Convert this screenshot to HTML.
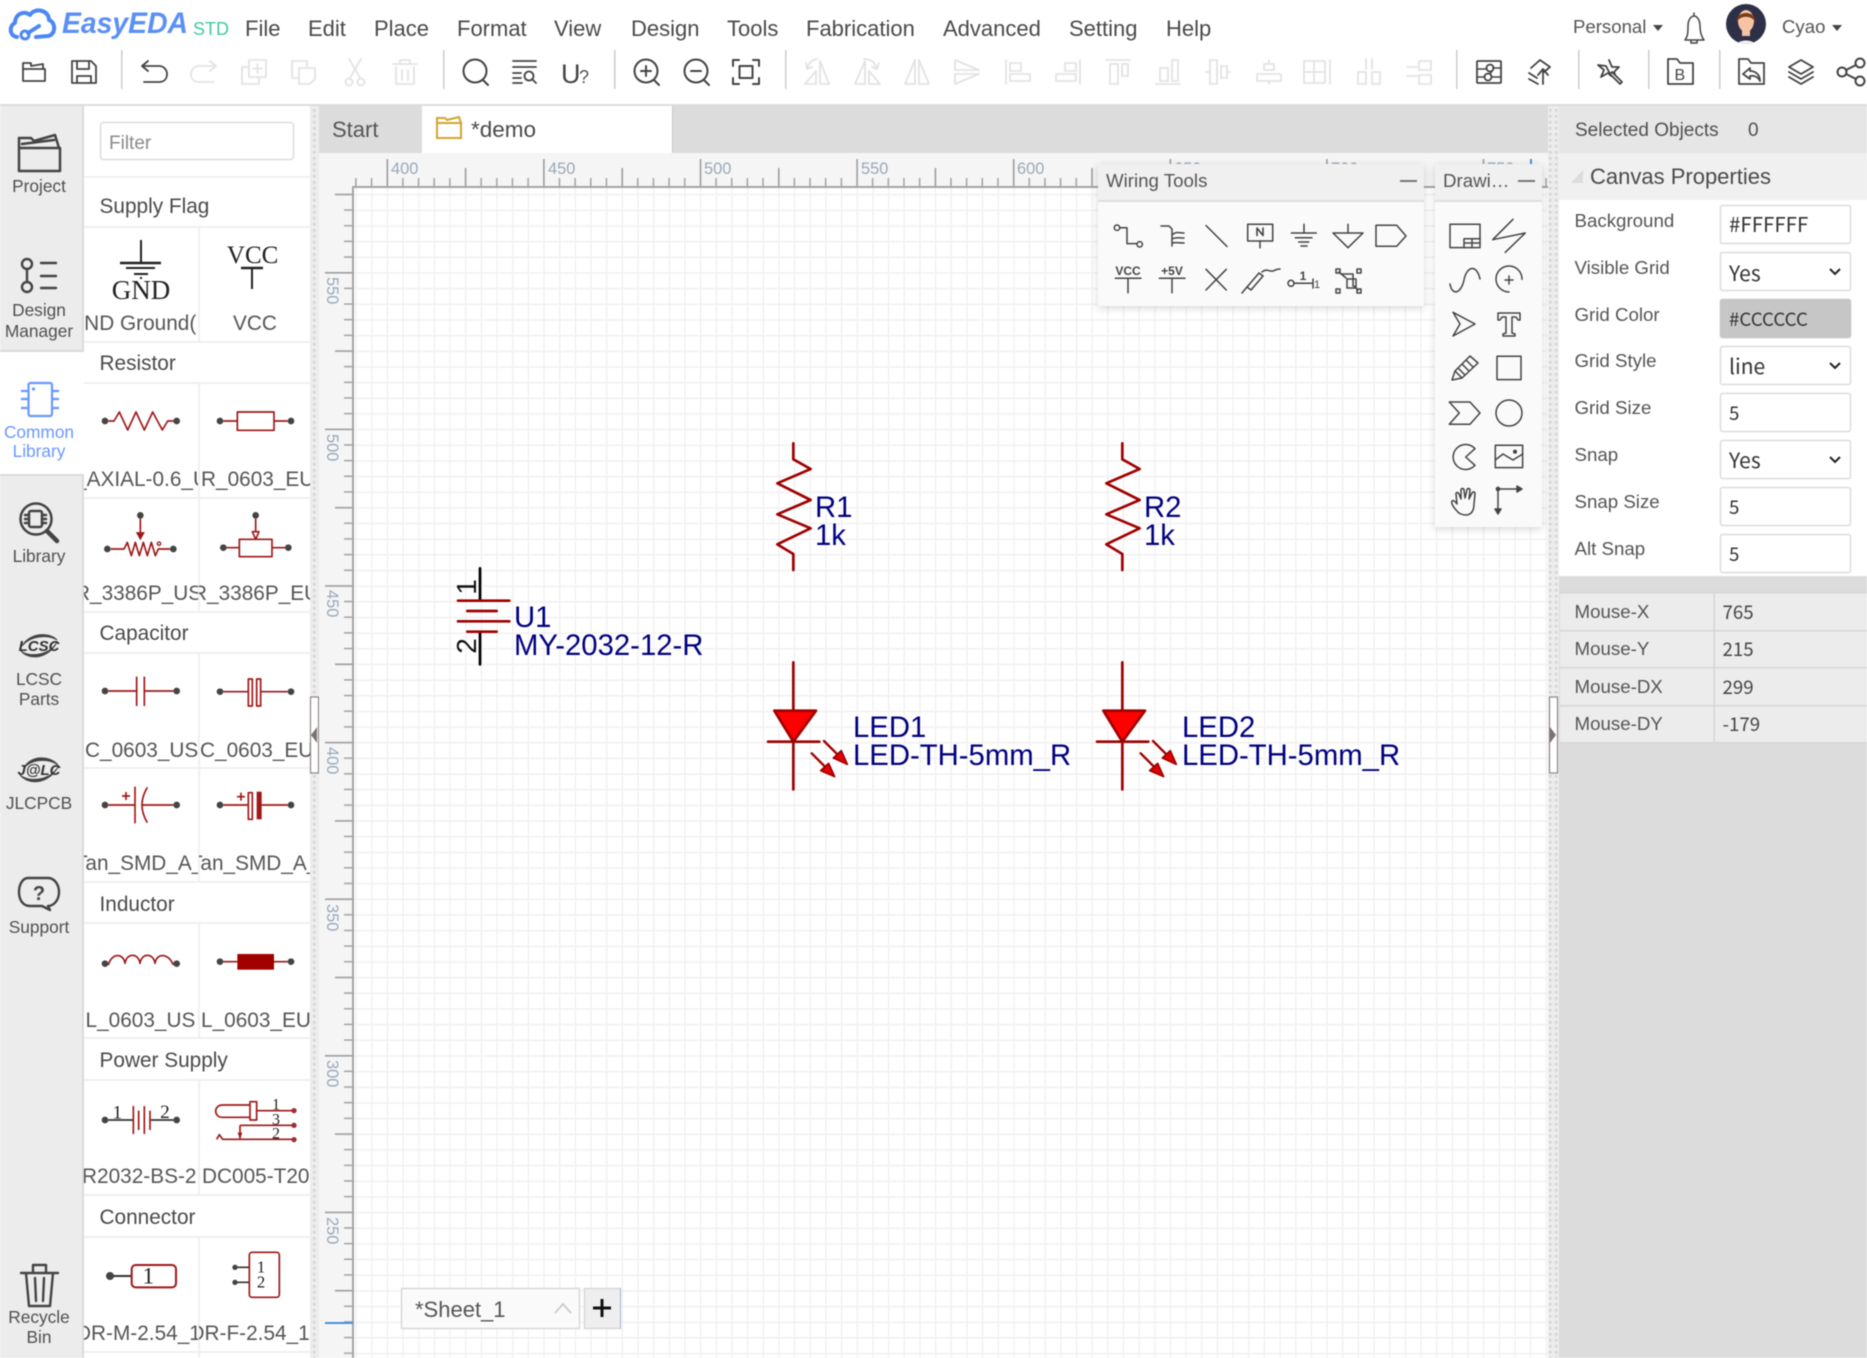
<!DOCTYPE html>
<html><head><meta charset="utf-8"><title>EasyEDA</title>
<style>
html,body{margin:0;padding:0;background:#fff;width:1867px;height:1358px;overflow:hidden}
svg#r{position:absolute;left:0;top:0;filter:blur(.4px)}
text{font-family:"Liberation Sans",sans-serif;fill:#4a4a4a}
.m text{font-size:22px}
.s{font-size:17.3px;text-anchor:middle;fill:#505050}
.h text{font-size:20.8px}
.c text{font-size:20.8px;fill:#555}
.l text{font-size:18.7px;fill:#555}
.v,.v text{font-family:"Noto Sans CJK SC","Liberation Sans",sans-serif;font-size:18.7px;fill:#333}
.sel{font-family:"Noto Sans CJK SC","Liberation Sans",sans-serif;font-size:21px;fill:#333}
.rl text{font-size:16.4px;fill:#9aa8b8}
.sch text{font-size:29.3px;fill:#000080}
.e{fill:none;stroke:#444;stroke-width:1.8;stroke-linejoin:round;stroke-linecap:round}
.d{fill:none;stroke:#e3e3e3;stroke-width:1.8;stroke-linejoin:round;stroke-linecap:round}
.t{fill:none;stroke:#444;stroke-width:1.5;stroke-linejoin:round;stroke-linecap:round}
.w{fill:none;stroke:#a01818;stroke-width:5;stroke-linejoin:round}
.k{fill:none;stroke:#333;stroke-width:5}
.dot{fill:#444}
.red{fill:none;stroke:#a00000;stroke-width:8;stroke-linecap:round;stroke-linejoin:round}
.sf{font-family:"Liberation Serif",serif;fill:#222}
.sh{filter:drop-shadow(0 2px 4px rgba(0,0,0,.16))}
</style></head><body>
<svg id="r" xmlns="http://www.w3.org/2000/svg" width="1867" height="1358" viewBox="0 0 1867 1358">
<defs>
<pattern id="grid" patternUnits="userSpaceOnUse" x="387" y="193.9" width="15.66" height="15.66">
<rect x="0" y="0" width="1" height="15.66" fill="#ebebeb"/><rect x="0" y="0" width="15.66" height="1.6" fill="#f1f1f1"/>
</pattern>
<pattern id="dots" patternUnits="userSpaceOnUse" width="6" height="6"><rect width="6" height="6" fill="#ececec"/><rect x="1" y="1" width="2.5" height="2.5" fill="#d4d4d4"/></pattern>
<pattern id="rh" patternUnits="userSpaceOnUse" x="386.5" y="0" width="156.6" height="200">
<g fill="#9c9c9c"><rect x="0" y="159" width="1.6" height="28"/><rect x="78.3" y="168" width="1.6" height="19"/>
<rect x="15.66" y="178" width="1.4" height="9"/><rect x="31.32" y="178" width="1.4" height="9"/><rect x="46.98" y="178" width="1.4" height="9"/><rect x="62.64" y="178" width="1.4" height="9"/>
<rect x="93.96" y="178" width="1.4" height="9"/><rect x="109.62" y="178" width="1.4" height="9"/><rect x="125.28" y="178" width="1.4" height="9"/><rect x="140.94" y="178" width="1.4" height="9"/></g>
</pattern>
<pattern id="rv" patternUnits="userSpaceOnUse" x="0" y="272" width="400" height="156.6">
<g fill="#9c9c9c"><rect y="0" x="325" width="28" height="1.6"/><rect y="78.3" x="335" width="18" height="1.6"/>
<rect y="15.66" x="344" width="9" height="1.4"/><rect y="31.32" x="344" width="9" height="1.4"/><rect y="46.98" x="344" width="9" height="1.4"/><rect y="62.64" x="344" width="9" height="1.4"/>
<rect y="93.96" x="344" width="9" height="1.4"/><rect y="109.62" x="344" width="9" height="1.4"/><rect y="125.28" x="344" width="9" height="1.4"/><rect y="140.94" x="344" width="9" height="1.4"/></g>
</pattern>
<clipPath id="cl"><rect x="84" y="0" width="114" height="1358"/></clipPath>
<clipPath id="cr"><rect x="199" y="0" width="111" height="1358"/></clipPath>
<clipPath id="av"><circle cx="1746" cy="24" r="20"/></clipPath>
</defs>

<!-- page backgrounds -->
<rect width="1867" height="1358" fill="#fff"/>
<rect x="0" y="104" width="1867" height="2" fill="#dcdcdc"/>

<!-- logo -->
<path d="M17,37 C9,36 9,25 15,23 C15,14 24,10 30,15 C35,7 49,10 49,20 C56,22 56,35 48,36 L36,37" fill="none" stroke="#4c88f5" stroke-width="4" stroke-linejoin="round" stroke-linecap="round"/>
<path d="M39,26 L28,33" fill="none" stroke="#4c88f5" stroke-width="4" stroke-linecap="round"/><circle cx="25" cy="35" r="4" fill="none" stroke="#4c88f5" stroke-width="3"/>
<text x="62" y="33" font-size="30" font-weight="bold" font-style="italic" textLength="126" lengthAdjust="spacingAndGlyphs" style="fill:#5a90f5">EasyEDA</text>
<text x="193" y="35" font-size="18" textLength="36" lengthAdjust="spacingAndGlyphs" style="fill:#43c9a3">STD</text>

<!-- menu -->
<g class="m">
<text x="245" y="36">File</text><text x="308" y="36">Edit</text><text x="374" y="36">Place</text><text x="457" y="36">Format</text><text x="554" y="36">View</text><text x="631" y="36">Design</text><text x="727" y="36">Tools</text><text x="806" y="36">Fabrication</text><text x="943" y="36">Advanced</text><text x="1069" y="36">Setting</text><text x="1166" y="36">Help</text>
</g>
<text x="1573" y="33" style="font-size:18.6px;fill:#555">Personal</text><path d="M1653,25 h10 l-5,6 z" fill="#444"/>
<path d="M1685,40 C1688,36 1688,32 1688,26 C1688,20 1691,16 1694,16 C1697,16 1700,20 1700,26 C1700,32 1701,36 1704,40 Z M1691,40 v3 h6 v-3 M1694,16 v-3" class="t"/>
<circle cx="1746" cy="24" r="20" fill="#2d3046"/><g clip-path="url(#av)"><path d="M1734,48 C1736,38 1756,38 1758,48 Z" fill="#f2f2f2"/><rect x="1742" y="26" width="8" height="10" fill="#f6c4a4"/><ellipse cx="1746" cy="21" rx="8" ry="11" fill="#f6c4a4"/><path d="M1737,22 C1735,10 1757,10 1755,22 C1752,15 1740,15 1737,22Z" fill="#7a3c1c"/></g>
<text x="1782" y="33" style="font-size:18.6px;fill:#555">Cyao</text><path d="M1832,25 h10 l-5,6 z" fill="#444"/>

<!-- toolbar separators -->
<g fill="#cfcfcf"><rect x="121" y="50" width="1.6" height="39"/><rect x="443" y="50" width="1.6" height="39"/><rect x="614" y="50" width="1.6" height="39"/><rect x="785" y="50" width="1.6" height="39"/><rect x="1456" y="50" width="1.6" height="39"/><rect x="1578" y="50" width="1.6" height="39"/><rect x="1648" y="50" width="1.6" height="39"/><rect x="1719" y="50" width="1.6" height="39"/></g>

<!-- toolbar icons -->
<g transform="translate(34,72)" class="e"><path d="M-11,-3 H11 V9 H-11 Z M-11,-3 V-9 H-3 V-6 M-3,-6 L9,-8 V-3"/></g>
<g transform="translate(84,72)" class="e"><path d="M-12,-11 H7 L12,-6 V11 H-12 Z M-7,-11 V-3 H5 V-11 M-7,11 V4 H7 V11"/></g>
<g transform="translate(154,72)" class="e"><path d="M-6,-11 L-12,-6 L-6,-1 M-12,-6 H5 C10,-6 13,-2 13,2 C13,7 10,10 5,10 H-10"/></g>
<g transform="translate(204,72) scale(-1,1)" class="d"><path d="M-6,-11 L-12,-6 L-6,-1 M-12,-6 H5 C10,-6 13,-2 13,2 C13,7 10,10 5,10 H-10"/></g>
<g transform="translate(254,72)" class="d"><path d="M-5,-12 H12 V5 H-5 Z M-5,-5 H-12 V12 H5 V5 M3.5,-8 V1 M-1,-3.5 H8"/></g>
<g transform="translate(304,72)" class="d"><path d="M-12,-11 H3 V-4 M-12,-11 V6 H-5 M-5,-4 H11 V7 L6,12 H-5 Z"/></g>
<g transform="translate(355,72)" class="d"><path d="M-6,-13 L5,6 M6,-13 L-5,6"/><circle cx="-6" cy="10" r="3.5"/><circle cx="6" cy="10" r="3.5"/></g>
<g transform="translate(405,72)" class="d"><path d="M-12,-8 H12 M-5,-8 V-12 H5 V-8 M-9,-5 V12 H9 V-5 M-3,-2 V8 M3,-2 V8"/></g>
<g transform="translate(475,72)" class="e" style="stroke-width:2"><circle cx="0" cy="-1" r="11.5"/><path d="M8,8 L13,13"/></g>
<g transform="translate(525,72)" class="e"><path d="M-12,-11 H11 M-12,-5 H11 M-12,1 H-4 M-12,6 H-4 M-12,11 H-3"/><circle cx="4" cy="4" r="4.5"/><path d="M7.5,7.5 L11,11"/></g>
<text x="561" y="83" font-size="27" style="fill:#444">U</text><text x="579" y="83" font-size="18" style="fill:#555">?</text>
<g transform="translate(646,72)" class="e" style="stroke-width:2"><circle cx="0" cy="-1" r="11.5"/><path d="M8,8 L13,13 M-5,-1 H5 M0,-6 V4"/></g>
<g transform="translate(696,72)" class="e" style="stroke-width:2"><circle cx="0" cy="-1" r="11.5"/><path d="M8,8 L13,13 M-5,-1 H5"/></g>
<g transform="translate(746,72)" class="e" style="stroke-width:2"><path d="M-13,-6 V-12 H-7 M7,-12 H13 V-6 M13,6 V12 H7 M-7,12 H-13 V6"/><rect x="-6.5" y="-6" width="13" height="12"/></g>
<g transform="translate(817,72)" class="d"><path d="M3,-11 L12,12 H3 Z M-1,-1 V12 H-12 Z M-10,-3 C-8,-10 -5,-12 0,-13 M-10,-3 L-11,-9 M-10,-3 L-5,-5"/></g>
<g transform="translate(867,72)" class="d"><path d="M-2,-11 L-12,12 H-2 Z M2,-1 V12 H13 Z M-3,-13 C3,-13 8,-10 10,-3 M10,-3 L12,-9 M10,-3 L5,-5"/></g>
<g transform="translate(917,72)" class="d"><path d="M-2,-12 V12 H-12 Z M2,-12 V12 H12 Z"/></g>
<g transform="translate(967,72)" class="d"><path d="M-12,-2 H12 L-12,-12 Z M-12,2 H12 L-12,12 Z"/></g>
<g transform="translate(1018,72)" class="d"><path d="M-12,-12 V12 M-8,-9 H3 V-1 H-8 Z M-8,2 H12 V9 H-8 Z"/></g>
<g transform="translate(1068,72)" class="d"><path d="M12,-12 V12 M8,-9 H-3 V-1 H8 Z M8,2 H-12 V9 H8 Z"/></g>
<g transform="translate(1118,72)" class="d"><path d="M-12,-12 H12 M-8,-8 H0 V12 H-8 Z M4,-8 H10 V4 H4 Z"/></g>
<g transform="translate(1168,72)" class="d"><path d="M-12,12 H12 M-8,-4 H0 V9 H-8 Z M4,-12 H10 V9 H4 Z"/></g>
<g transform="translate(1218,72)" class="d"><path d="M-12,0 H-8 M-8,-12 H-1 V12 H-8 Z M3,-6 H9 V6 H3 Z M9,0 H12"/></g>
<g transform="translate(1269,72)" class="d"><path d="M0,-12 V-8 M-5,-8 H5 V-2 H-5 Z M-12,2 H12 V9 H-12 Z M0,9 V12"/></g>
<g transform="translate(1317,72)" class="d"><path d="M-13,-11 H8 V11 H-13 Z M-13,0 H8 M-3,-11 V11 M13,-12 V12"/></g>
<g transform="translate(1369,72)" class="d"><path d="M-3,-13 V-3 M3,-13 V-3 M-11,0 H-3 V12 H-11 Z M3,0 H11 V12 H3 Z"/></g>
<g transform="translate(1419,72)" class="d"><path d="M-12,-5 H-2 M-12,4 H-2 M0,-11 H12 V-2 H0 Z M0,3 H12 V12 H0 Z"/></g>
<g transform="translate(1489,72)" class="e"><rect x="-12" y="-11" width="24" height="22" rx="1"/><circle cx="1" cy="-4" r="3.5"/><circle cx="-1" cy="5" r="3.5"/><path d="M-12,-3 H-3 M4,-4 H12 M-12,5 H-5 M3,5 H12 M3,-1 L1,2" style="stroke-width:1.6"/></g>
<g transform="translate(1540,72)" class="e"><path d="M-9,-4 L0,-12 L10,-5 L4,0 M-11,1 L-3,6 M-11,7 L-2,12 M3,12 V-2 M-2,3 L3,-3 L8,3"/></g>
<g transform="translate(1610,72)" class="e"><path d="M-1,-12 L2,-5 L9,-5 L4,0 L5,2 M1,4 L-2,1 L-9,5 L-6,-2 L-12,-7 L-4,-6 Z M2,0 L12,10 L10,12 L0,2 Z"/></g>
<g transform="translate(1680,72)" class="e"><path d="M-12,-13 H-3 L0,-9 H13 V12 H-12 Z"/></g><text x="1674.5" y="80" font-size="16" style="fill:#444">B</text>
<g transform="translate(1751,72)" class="e"><path d="M-12,-13 H-3 L0,-9 H13 V12 H-12 Z M-1,-4 L-8,2 L-1,7 V4 C3,3 7,5 9,9 C9,3 5,-1 -1,-1 Z"/></g>
<g transform="translate(1801,72)" class="e"><path d="M0,-12 L12,-5 L0,2 L-12,-5 Z M-12,0 L0,7 L12,0 M-12,5 L0,12 L12,5"/></g>
<g transform="translate(1851,72)" class="e" style="stroke-width:2"><circle cx="-9" cy="0" r="4.5"/><circle cx="9" cy="-9" r="4.5"/><circle cx="9" cy="9" r="4.5"/><path d="M-5,-2 L5,-7 M-5,2 L5,7"/></g>

<!-- left sidebar -->
<rect x="0" y="106" width="84" height="1252" fill="#ececec"/>
<rect x="82" y="106" width="2" height="246" fill="#dadada"/><rect x="82" y="474" width="2" height="884" fill="#dadada"/>
<rect x="0" y="352" width="84" height="122" fill="#fff"/><rect x="0" y="350" width="84" height="2" fill="#dadada"/><rect x="0" y="474" width="84" height="2" fill="#dadada"/>

<g transform="translate(39,153)" class="e" style="stroke-width:2.5"><path d="M-20,-5 H21 V18 H-20 Z M-20,-5 V-15 H-8 L-5,-12 L16,-18 L20,-5 M-17,-9 L15,-13"/></g>
<text class="s" x="39" y="192">Project</text>
<g class="e" style="stroke-width:2.4"><circle cx="27" cy="264" r="5"/><circle cx="27" cy="287" r="5"/><path d="M27,269 V282 M41,263 H56 M41,276 H56 M41,288 H56"/></g>
<text class="s" x="39" y="316">Design</text><text class="s" x="39" y="337">Manager</text>
<g fill="none" stroke="#6a98ff" stroke-width="2.2"><rect x="28.5" y="383" width="23.5" height="33" rx="2"/><path d="M21,391 H28 M21,399 H28 M21,408 H28 M52,391 H59 M52,399 H59 M52,408 H59"/></g><circle cx="33.5" cy="389" r="1.6" fill="#6a98ff"/>
<text class="s" x="39" y="438" style="fill:#6a98ff">Common</text><text class="s" x="39" y="457" style="fill:#6a98ff">Library</text>
<g class="e" style="stroke-width:2.5"><circle cx="36" cy="519" r="15.5"/><rect x="29" y="511" width="13" height="16" rx="2"/><path d="M25,515 H29 M25,519 H29 M25,523 H29 M42,515 H46 M42,519 H46 M42,523 H46"/><path d="M47,531 L57,541" style="stroke-width:4.5"/></g>
<text class="s" x="39" y="562">Library</text>
<g><path d="M21,651 C28,660 48,660 57,642 C50,655 30,658 21,651Z M57,640 C50,632 30,632 22,646 C30,636 48,634 57,640Z" fill="#444" stroke="#444"/><text x="39" y="651" font-size="15" font-weight="bold" font-style="italic" text-anchor="middle" style="fill:#333">LCSC</text></g>
<text class="s" x="39" y="685">LCSC</text><text class="s" x="39" y="705">Parts</text>
<g><path d="M20,775 C28,785 48,785 58,767 C50,780 30,783 20,775Z M58,765 C50,755 30,755 24,768 C32,759 48,758 58,765Z" fill="#444" stroke="#444"/><text x="39" y="775" font-size="15" font-weight="bold" font-style="italic" text-anchor="middle" style="fill:#333">J@LC</text></g>
<text class="s" x="39" y="809">JLCPCB</text>
<g class="e" style="stroke-width:2.4"><path d="M28,878 H48 C54,878 59,884 59,892 C59,901 53,906 48,906 L50,910 L42,906 H30 C23,906 19,900 19,892 C19,884 23,878 28,878 Z"/></g>
<text x="39" y="900" font-size="20" font-weight="bold" text-anchor="middle" style="fill:#444">?</text>
<text class="s" x="39" y="933">Support</text>
<g class="e" style="stroke-width:2.4"><path d="M21,1273 H58 M33,1273 V1265 H46 V1273 M26,1273 L29,1306 H50 L53,1273 M35,1278 L36,1301 M44,1278 L43,1301"/></g>
<text class="s" x="39" y="1323">Recycle</text><text class="s" x="39" y="1343">Bin</text>

<!-- library panel -->
<rect x="84" y="106" width="226" height="1252" fill="#fff"/>
<rect x="100.5" y="122.5" width="193" height="37" rx="3" fill="#fff" stroke="#dcdcdc" stroke-width="1.5"/>
<text x="109" y="149" style="font-size:19px;fill:#8a8a8a">Filter</text>
<g fill="#f0f0f0">
<rect x="84" y="176" width="226" height="2"/><rect x="84" y="226" width="226" height="2"/><rect x="84" y="341" width="226" height="2"/><rect x="84" y="382" width="226" height="2"/><rect x="84" y="497" width="226" height="2"/><rect x="84" y="611" width="226" height="2"/><rect x="84" y="652" width="226" height="2"/><rect x="84" y="767" width="226" height="2"/><rect x="84" y="881" width="226" height="2"/><rect x="84" y="922" width="226" height="2"/><rect x="84" y="1037" width="226" height="2"/><rect x="84" y="1079" width="226" height="2"/><rect x="84" y="1194" width="226" height="2"/><rect x="84" y="1236" width="226" height="2"/><rect x="84" y="1351" width="226" height="2"/>
<rect x="198" y="228" width="2" height="113"/><rect x="198" y="384" width="2" height="227"/><rect x="198" y="654" width="2" height="227"/><rect x="198" y="924" width="2" height="113"/><rect x="198" y="1081" width="2" height="113"/><rect x="198" y="1238" width="2" height="120"/>
</g>
<g class="h"><text x="99.5" y="213">Supply Flag</text><text x="99.5" y="370">Resistor</text><text x="99.5" y="640">Capacitor</text><text x="99.5" y="911">Inductor</text><text x="99.5" y="1067">Power Supply</text><text x="99.5" y="1224">Connector</text></g>
<g class="c" clip-path="url(#cl)">
<text x="68" y="330">GND Ground(</text>
<text x="60" y="486">R_AXIAL-0.6_US</text>
<text x="75" y="600">R_3386P_US</text>
<text x="85" y="757">C_0603_US</text>
<text x="75" y="870">Tan_SMD_A_US</text>
<text x="85.5" y="1027">L_0603_US</text>
<text x="67" y="1183">CR2032-BS-2</text>
<text x="61" y="1340">HDR-M-2.54_1</text>
</g>
<g class="c" clip-path="url(#cr)">
<text x="255" y="330" text-anchor="middle">VCC</text>
<text x="201" y="486">R_0603_EU</text>
<text x="192" y="600">R_3386P_EU</text>
<text x="200" y="757">C_0603_EU</text>
<text x="190" y="870">Tan_SMD_A_EU</text>
<text x="201" y="1027">L_0603_EU</text>
<text x="202" y="1183">DC005-T20</text>
<text x="174.5" y="1340">HDR-F-2.54_1</text>
</g>

<!-- supply symbols -->
<g stroke="#222" fill="none"><path d="M141,240 V263" stroke-width="2"/><path d="M120,263 H161" stroke-width="2.4"/><path d="M126,268 H155" stroke-width="2"/><path d="M134,274 H148" stroke-width="2"/><path d="M141,277 V279" stroke-width="2"/><path d="M241,268 H263" stroke-width="2.4"/><path d="M252,268 V289" stroke-width="2"/></g>
<text class="sf" x="141" y="299" font-size="27" text-anchor="middle">GND</text>
<text class="sf" x="252.6" y="263" font-size="25" text-anchor="middle">VCC</text>

<!-- resistors / capacitors -->
<g transform="translate(0,360) scale(.33333)">
<path class="w" d="M325,183 H342 L358,156 L383,210 L408,156 L433,210 L458,156 L487,210 L503,183 H520"/>
<circle class="dot" cx="315" cy="183" r="10"/><circle class="dot" cx="530" cy="183" r="10"/>
<path class="w" d="M670,183 H712 M822,183 H863"/><rect class="w" x="712" y="156" width="110" height="55"/><circle class="dot" cx="660" cy="183" r="10"/><circle class="dot" cx="873" cy="183" r="10"/>
<path class="w" d="M332,567 H372 L382,547 L394,587 L406,547 L418,587 L430,547 L442,587 L454,547 L466,587 L475,567 H510 M421,476 V520"/><path d="M410,518 H432 L421,538 Z" fill="#a01818" stroke="#a01818" stroke-width="3"/><circle cx="477" cy="551" r="5" fill="none" stroke="#a01818" stroke-width="4"/>
<circle class="dot" cx="322" cy="567" r="10"/><circle class="dot" cx="520" cy="567" r="10"/><circle class="dot" cx="421" cy="466" r="10"/>
<path class="w" d="M680,563 H718 M816,563 H855 M767,476 V515 M757,515 H777 L767,538 Z"/><rect class="w" x="718" y="538" width="98" height="52"/><circle class="dot" cx="670" cy="563" r="10"/><circle class="dot" cx="865" cy="563" r="10"/><circle class="dot" cx="767" cy="466" r="10"/>
<path class="w" d="M325,993 H410 M435,993 H520 M410,950 V1038 M433,950 V1038"/><circle class="dot" cx="315" cy="993" r="10"/><circle class="dot" cx="530" cy="993" r="10"/>
<path class="w" d="M670,995 H745 M782,995 H863"/><rect class="w" x="745" y="957" width="12" height="81"/><rect class="w" x="770" y="957" width="12" height="81"/><circle class="dot" cx="660" cy="995" r="10"/><circle class="dot" cx="873" cy="995" r="10"/>
</g>
<g transform="translate(0,700) scale(.33333)">
<path class="w" d="M325,315 H405 M405,260 V370 M442,262 Q410,315 442,368 M425,315 H520 M366,288 H390 M378,276 V300"/><circle class="dot" cx="315" cy="315" r="10"/><circle class="dot" cx="530" cy="315" r="10"/>
<path class="w" d="M670,315 H745 M785,315 H863 M711,290 H735 M723,278 V302"/><rect class="w" x="745" y="278" width="12" height="80"/><rect x="770" y="275" width="15" height="83" fill="#a01818"/><circle class="dot" cx="660" cy="315" r="10"/><circle class="dot" cx="873" cy="315" r="10"/>
<path class="w" d="M325,795 C335,758 370,758 375,790 C380,758 415,758 420,790 C425,758 460,758 465,790 C470,758 505,758 520,795"/><circle class="dot" cx="315" cy="791" r="10"/><circle class="dot" cx="530" cy="791" r="10"/>
<path class="w" d="M670,785 H712 M822,785 H863"/><rect x="712" y="762" width="110" height="47" fill="#a00000"/><circle class="dot" cx="660" cy="785" r="10"/><circle class="dot" cx="873" cy="785" r="10"/>
</g>
<g transform="translate(0,1030) scale(.33333)">
<path class="k" d="M325,270 H398 M452,270 H520"/><path class="w" d="M400,228 V312 M416,242 V300 M433,228 V312 M450,242 V300"/><circle class="dot" cx="315" cy="270" r="10"/><circle class="dot" cx="530" cy="270" r="10"/>
<text class="sf" x="352" y="266" font-size="58" text-anchor="middle">1</text><text class="sf" x="495" y="264" font-size="58" text-anchor="middle">2</text>
<path class="w" d="M750,225 H668 C640,225 640,262 668,262 H750 M770,242 H880 M720,286 H880 M720,286 V325 M650,328 L658,314 L668,328 H880"/><rect class="w" x="750" y="215" width="20" height="55"/><path d="M713,308 H727 L720,328 Z" fill="#a01818"/>
<circle class="dot" cx="882" cy="242" r="8" style="fill:#a03030"/><circle class="dot" cx="882" cy="286" r="8" style="fill:#a03030"/><circle class="dot" cx="882" cy="329" r="8" style="fill:#a03030"/>
<text class="sf" x="828" y="238" font-size="48" text-anchor="middle">1</text><text class="sf" x="828" y="283" font-size="48" text-anchor="middle">3</text><text class="sf" x="828" y="325" font-size="48" text-anchor="middle">2</text>
<path class="k" d="M330,738 H395" style="stroke-width:6"/><circle class="dot" cx="330" cy="738" r="12"/><rect x="395" y="705" width="133" height="67" rx="12" fill="none" stroke="#a01818" stroke-width="6"/><text class="sf" x="445" y="760" font-size="70" text-anchor="middle">1</text>
<path class="k" d="M705,712 H748 M705,757 H748"/><circle class="dot" cx="705" cy="712" r="8"/><circle class="dot" cx="705" cy="757" r="8"/><rect x="748" y="667" width="90" height="135" rx="8" fill="none" stroke="#a01818" stroke-width="5"/><text class="sf" x="783" y="727" font-size="50" text-anchor="middle">1</text><text class="sf" x="783" y="772" font-size="50" text-anchor="middle">2</text>
</g>

<!-- left splitter -->
<rect x="310" y="106" width="9" height="1252" fill="url(#dots)"/>
<rect x="310.5" y="697" width="8" height="76" fill="#fff" stroke="#8f8585" stroke-width="1.2"/>
<path d="M317,727 V743 L311,735 Z" fill="#7d7272"/>

<!-- tabs -->
<rect x="319" y="106" width="1229" height="47" fill="#dcdcdc"/>
<rect x="422" y="106" width="250" height="47" fill="#fff"/><rect x="672" y="106" width="1" height="47" fill="#c8c8c8"/>
<text x="332" y="137" style="font-size:22px;fill:#555">Start</text>
<g fill="none" stroke="#d4a62f" stroke-width="2"><path d="M437,123 H461 V138 H437 Z M437,123 V118 H445 L447,120 L459,117 L461,123"/></g>
<text x="471" y="137" style="font-size:22.5px;fill:#4a4a4a">*demo</text>

<!-- canvas -->
<rect x="319" y="153" width="1229" height="1205" fill="#f5f5f5"/>
<rect x="354" y="188" width="1194" height="1170" fill="#fff"/>
<rect x="354" y="188" width="1194" height="1170" fill="url(#grid)"/>
<rect x="355" y="155" width="1193" height="32" fill="url(#rh)"/>
<rect x="320" y="188" width="33" height="1170" fill="url(#rv)"/>
<rect x="352" y="186" width="1196" height="2" fill="#a4a4a4"/>
<rect x="352" y="186" width="2" height="1172" fill="#a4a4a4"/>
<g class="rl">
<text x="391" y="174">400</text><text x="548" y="174">450</text><text x="704" y="174">500</text><text x="861" y="174">550</text><text x="1017" y="174">600</text><text x="1174" y="174">650</text><text x="1331" y="174">700</text><text x="1487" y="174">750</text>
<text transform="translate(327,277) rotate(90)">550</text><text transform="translate(327,434) rotate(90)">500</text><text transform="translate(327,590) rotate(90)">450</text><text transform="translate(327,747) rotate(90)">400</text><text transform="translate(327,904) rotate(90)">350</text><text transform="translate(327,1060) rotate(90)">300</text><text transform="translate(327,1217) rotate(90)">250</text>
</g>
<rect x="325" y="1322" width="28" height="2" fill="#4a90d9"/>
<rect x="1530" y="159" width="2" height="10" fill="#4a90d9"/>

<!-- schematic -->
<g transform="translate(440,420) scale(.33333)">
<path class="red" d="M1060,70 V118 L1112,147 L1012,190 L1112,240 L1012,283 L1112,325 L1012,373 L1060,402 V450"/>
<path class="red" d="M2047,70 V118 L2099,147 L1999,190 L2099,240 L1999,283 L2099,325 L1999,373 L2047,402 V450"/>
<path d="M120,445 V540 M120,635 V733" stroke="#000" stroke-width="8" fill="none" stroke-linecap="round"/>
<path class="red" d="M54,542 H208 M82,573 H170 M54,604 H208 M82,635 H170"/>
<g>
<path class="red" d="M1060,727 V870 M984,965 H1138 M1060,965 V1108"/>
<path d="M1003,872 H1128 L1060,965 Z" fill="#ff0000" stroke="#a00000" stroke-width="8" stroke-linejoin="round"/>
<path class="red" d="M1152,963 L1192,1003 M1115,1000 L1155,1040" style="stroke-width:7"/>
<path d="M1180,1014 L1204,992 L1222,1033 Z M1142,1052 L1166,1030 L1184,1070 Z" fill="#e00000" stroke="#a00000" stroke-width="5" stroke-linejoin="round"/>
</g>
<g transform="translate(987,0)">
<path class="red" d="M1060,727 V870 M984,965 H1138 M1060,965 V1108"/>
<path d="M1003,872 H1128 L1060,965 Z" fill="#ff0000" stroke="#a00000" stroke-width="8" stroke-linejoin="round"/>
<path class="red" d="M1152,963 L1192,1003 M1115,1000 L1155,1040" style="stroke-width:7"/>
<path d="M1180,1014 L1204,992 L1222,1033 Z M1142,1052 L1166,1030 L1184,1070 Z" fill="#e00000" stroke="#a00000" stroke-width="5" stroke-linejoin="round"/>
</g>
</g>
<text transform="translate(476,587) rotate(-90)" text-anchor="middle" font-size="28" style="fill:#111">1</text>
<text transform="translate(476,646) rotate(-90)" text-anchor="middle" font-size="28" style="fill:#111">2</text>
<g class="sch">
<text x="815" y="517">R1</text><text x="815" y="545">1k</text>
<text x="1144" y="517">R2</text><text x="1144" y="545">1k</text>
<text x="514" y="627">U1</text><text x="514" y="655">MY-2032-12-R</text>
<text x="853" y="737">LED1</text><text x="853" y="765">LED-TH-5mm_R</text>
<text x="1182" y="737">LED2</text><text x="1182" y="765">LED-TH-5mm_R</text>
</g>

<!-- sheet tab -->
<rect x="401.5" y="1288.5" width="178" height="40" fill="#fafafa" stroke="#d8d8d8" stroke-width="1.5"/>
<text x="415" y="1317" style="font-size:22px;fill:#555">*Sheet_1</text>
<path d="M555,1313 L563,1304 L571,1313" fill="none" stroke="#ccc" stroke-width="1.8"/>
<rect x="584.5" y="1288.5" width="36" height="40" fill="#eeeeee" stroke="#d8d8d8" stroke-width="1.5"/>
<rect x="620" y="1288" width="1" height="41" fill="#a8c0e8"/>
<path d="M593,1308 H611 M602,1299 V1317" stroke="#111" stroke-width="3" fill="none"/>

<!-- wiring tools -->
<rect class="sh" x="1098" y="164" width="326" height="142" fill="#fafafa"/>
<rect x="1098" y="164" width="326" height="37" fill="#f0f0f0"/><rect x="1098" y="200" width="326" height="2" fill="#dedede"/>
<text x="1106" y="187" style="font-size:18.7px;fill:#555">Wiring Tools</text>
<rect x="1400" y="180" width="17" height="2" fill="#777"/>
<g class="t">
<g transform="translate(1128,236)"><circle cx="-11" cy="-8.3" r="2.7"/><path d="M-8,-8.3 H-1 V7.6 H9"/><circle cx="11.7" cy="8.3" r="2.7"/></g>
<g transform="translate(1172,236)"><path d="M-11,-10 H-3 L0,-7 V10 M0,-1 C4,-5 7,-3 12,-3 M0,3 C4,1 7,2 12,2 M0,7 C4,6 7,7 12,7"/></g>
<g transform="translate(1216,236)"><path d="M-10,-10.5 L11,10.5"/></g>
<g transform="translate(1260,236)"><rect x="-12.3" y="-11.7" width="25" height="16.7"/><path d="M0,5 V11.7"/><path d="M-3,-0.5 V-8 L3,-0.5 V-8" style="stroke-width:1.6"/></g>
<g transform="translate(1304,236)"><path d="M0,-11.7 V-3 M-12.7,-3 H12.3 M-8.7,1.7 H8 M-5.3,6 H4.7 M-3,10 H3"/></g>
<g transform="translate(1348,236)"><path d="M0,-11.7 V-3 M-15,-3 H15 L0,11.7 Z"/></g>
<g transform="translate(1391,236)"><path d="M-15,-10.7 H5.7 L15,0 L5.7,10.3 H-15 Z"/></g>
<g transform="translate(1128,280)"><path d="M-12.7,-1.7 H13 M0,-1.7 V12.7"/></g>
<g transform="translate(1172,280)"><path d="M-12.7,-1.7 H13 M0,-1.7 V12.7"/></g>
<g transform="translate(1216,280)"><path d="M-10,-10.7 L10.3,10 M10.3,-10.7 L-10,10"/></g>
<g transform="translate(1260,280)"><path d="M-18,13 L-13,7 M-13,7 L-9,10 L3,-4 L-1,-7 L-13,7 M2,-8 C6,-12 10,-8 13,-9 C15,-10 17,-11 20,-11"/></g>
<g transform="translate(1304,280)"><circle cx="-13" cy="3.3" r="3"/><path d="M-10,3.3 H9 M9,-1 V8"/></g>
<g transform="translate(1348,280)"><path d="M-7,-6 H5 V6 M-1,-1 H8 V8 H-1 Z M-9,-8 L-2,-2 M6,6 L10,10" /><rect x="-12" y="-11" width="4" height="4"/><rect x="9" y="-11" width="4" height="4"/><rect x="-12" y="9" width="4" height="4"/><rect x="9" y="9" width="4" height="4"/></g>
</g>
<text x="1128" y="275" font-size="12" font-weight="bold" text-anchor="middle" style="fill:#444">VCC</text>
<text x="1172" y="275" font-size="12" font-weight="bold" text-anchor="middle" style="fill:#444">+5V</text>
<text x="1303" y="280" font-size="12" font-weight="bold" text-anchor="middle" style="fill:#444">1</text>
<text x="1317" y="288" font-size="11" text-anchor="middle" style="fill:#444">1</text>

<!-- drawing tools -->
<rect class="sh" x="1435" y="164" width="107" height="363" fill="#fafafa"/>
<rect x="1435" y="164" width="107" height="37" fill="#f0f0f0"/><rect x="1435" y="200" width="107" height="2" fill="#dedede"/>
<text x="1443" y="187" style="font-size:18.7px;fill:#555">Drawi…</text>
<rect x="1518" y="180" width="17" height="2" fill="#777"/>
<g class="t">
<g transform="translate(1465,236)"><rect x="-15" y="-11.7" width="30" height="23.3"/><path d="M-1,11.7 V2.7 H15 M-1,7 H15 M7,2.7 V11.7"/></g>
<g transform="translate(1509,236)"><path d="M4,-16.7 L-16.3,3.7 L16.3,-3 L-3.7,16.3"/></g>
<g transform="translate(1465,280)"><path d="M-15,4 C-13,16 -4,14 -1,0 C1,-12 11,-18 15,-1"/></g>
<g transform="translate(1509,280)"><path d="M13,-0.7 A13,13 0 1 0 0,12 M0,-4 V4 M-4,0 H4"/></g>
<g transform="translate(1465,324)"><path d="M-12,-11.7 L10,0 L-12,12 L-5,0 Z"/></g>
<g transform="translate(1509,324)"><path d="M-11,-11 H11 V-4 H9 L7,-7 H3 V9 L6,10 V12 H-6 V10 L-3,9 V-7 H-7 L-9,-4 H-11 Z"/></g>
<g transform="translate(1465,368)"><path d="M-13,12 L-10,3 L5,-12 L13,-5 L-3,10 Z M-10,3 L-3,10 M-7,0 L0,7 M-3,-4 L4,3 M1,-8 L8,-1"/></g>
<g transform="translate(1509,368)"><rect x="-12" y="-11.7" width="24" height="23.3"/></g>
<g transform="translate(1465,413)"><path d="M-15.7,-11 H5 L15,0 L5,11.3 H-15.7 L-5.7,0 Z"/></g>
<g transform="translate(1509,413)"><circle cx="0" cy="0" r="13"/></g>
<g transform="translate(1465,457)"><path d="M10,-8.3 A12.5,12.5 0 1 0 10,8.3 L0.7,0 Z"/></g>
<g transform="translate(1509,457)"><rect x="-13.7" y="-11.7" width="27.3" height="22.3"/><path d="M-13.7,3 L-6,-3 L4,3 L13.7,-3"/><circle cx="6" cy="-5.3" r="1.3" fill="#444"/></g>
<g transform="translate(1465,501)"><path d="M-8,10 C-12,6 -14,2 -13,0 C-12,-1 -10,0 -8,3 L-9,-7 C-9,-9 -7,-9 -6,-7 L-4,-2 L-4,-11 C-4,-13 -1,-13 -1,-11 L0,-3 L2,-11 C2,-13 5,-13 5,-11 L4,-2 L7,-8 C8,-10 10,-9 10,-7 L9,3 C9,9 7,13 2,14 C-3,14 -6,13 -8,10 Z"/></g>
<g transform="translate(1509,501)"><path d="M-11,-12 H11 M-11,-12 V12"/><path d="M8,-15 L13,-12 L8,-9 Z M-14,8 L-11,13 L-8,8 Z" fill="#444"/><circle cx="-11" cy="-12" r="1.6" fill="#444"/></g>
</g>

<!-- right splitter -->
<rect x="1548" y="106" width="11" height="1252" fill="url(#dots)"/>
<rect x="1549.5" y="697" width="8" height="76" fill="#fff" stroke="#8f8585" stroke-width="1.2"/>
<path d="M1550,727 V743 L1556,735 Z" fill="#7d7272"/>

<!-- right panel -->
<rect x="1559" y="106" width="308" height="47" fill="#e6e6e6"/>
<rect x="1559" y="153" width="308" height="47" fill="#f0f0f0"/>
<rect x="1559" y="200" width="308" height="376" fill="#fff"/>
<rect x="1559" y="576" width="308" height="782" fill="#dcdcdc"/>
<text x="1575" y="136" style="font-size:19px;fill:#505050">Selected Objects</text><text x="1748" y="136" style="font-size:19px;fill:#505050">0</text>
<path d="M1583,170 V183 H1571 Z" fill="#dcdcdc"/>
<text x="1590" y="184" style="font-size:22px;fill:#4a4a4a">Canvas Properties</text>
<g class="l">
<text x="1574.5" y="227">Background</text><text x="1574.5" y="274">Visible Grid</text><text x="1574.5" y="321">Grid Color</text><text x="1574.5" y="367">Grid Style</text><text x="1574.5" y="414">Grid Size</text><text x="1574.5" y="461">Snap</text><text x="1574.5" y="508">Snap Size</text><text x="1574.5" y="555">Alt Snap</text>
</g>
<g fill="#fff" stroke="#dcdcdc" stroke-width="1.5">
<rect x="1720.5" y="205.5" width="130" height="38" rx="2"/><rect x="1720.5" y="252.5" width="130" height="38" rx="2"/>
<rect x="1720.5" y="299.5" width="130" height="38" rx="2" style="fill:#c6c6c6;stroke:#c6c6c6"/>
<rect x="1720.5" y="346.5" width="130" height="38" rx="2"/><rect x="1720.5" y="393.5" width="130" height="38" rx="2"/><rect x="1720.5" y="440.5" width="130" height="38" rx="2"/><rect x="1720.5" y="487.5" width="130" height="38" rx="2"/><rect x="1720.5" y="534.5" width="130" height="38" rx="2"/>
</g>
<text class="v" x="1729" y="232" style="font-size:20.5px">#FFFFFF</text><text class="sel" x="1729" y="281">Yes</text><text class="v" x="1729" y="326">#CCCCCC</text><text class="sel" x="1729" y="374">line</text><text class="v" x="1729" y="420">5</text><text class="sel" x="1729" y="468">Yes</text><text class="v" x="1729" y="514">5</text><text class="v" x="1729" y="561">5</text>
<path d="M1830,269 L1835,274 L1840,269 M1830,363 L1835,368 L1840,363 M1830,457 L1835,462 L1840,457" fill="none" stroke="#222" stroke-width="2"/>

<!-- mouse table -->
<rect x="1560" y="593" width="307" height="150" fill="#ececec"/>
<g fill="#d6d6d6"><rect x="1560" y="592" width="307" height="1.5"/><rect x="1560" y="630" width="307" height="1.5"/><rect x="1560" y="667" width="307" height="1.5"/><rect x="1560" y="705" width="307" height="1.5"/><rect x="1560" y="742" width="307" height="1.5"/><rect x="1713.5" y="593" width="1.5" height="150"/></g>
<g class="l"><text x="1574.5" y="618">Mouse-X</text><text x="1574.5" y="655">Mouse-Y</text><text x="1574.5" y="693">Mouse-DX</text><text x="1574.5" y="730">Mouse-DY</text></g>
<g class="v"><text x="1722.5" y="619" style="fill:#444">765</text><text x="1722.5" y="656" style="fill:#444">215</text><text x="1722.5" y="694" style="fill:#444">299</text><text x="1722.5" y="731" style="fill:#444">-179</text></g>
</svg>
</body></html>
